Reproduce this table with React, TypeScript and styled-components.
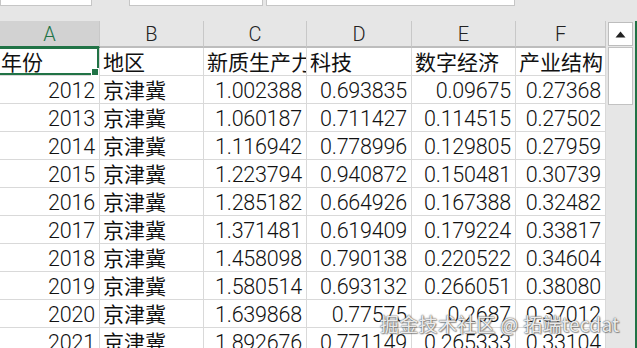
import styled, { createGlobalStyle } from "styled-components";

const GlobalStyle = createGlobalStyle`
  html, body { margin: 0; padding: 0; background: #e6e6e6; }
  body { font-family: "Liberation Sans", "Noto Sans CJK SC", sans-serif; }
`;

type Row = [string, string, string, string, string, string];

const rows: Row[] = [
  ["2012", "京津冀", "1.002388", "0.693835", "0.09675", "0.27368"],
  ["2013", "京津冀", "1.060187", "0.711427", "0.114515", "0.27502"],
  ["2014", "京津冀", "1.116942", "0.778996", "0.129805", "0.27959"],
  ["2015", "京津冀", "1.223794", "0.940872", "0.150481", "0.30739"],
  ["2016", "京津冀", "1.285182", "0.664926", "0.167388", "0.32482"],
  ["2017", "京津冀", "1.371481", "0.619409", "0.179224", "0.33817"],
  ["2018", "京津冀", "1.458098", "0.790138", "0.220522", "0.34604"],
  ["2019", "京津冀", "1.580514", "0.693132", "0.266051", "0.38080"],
  ["2020", "京津冀", "1.639868", "0.77575", "0.2687", "0.37012"],
  ["2021", "京津冀", "1.892676", "0.771149", "0.265333", "0.33104"],
];

const heads = ["年份", "地区", "新质生产力", "科技", "数字经济", "产业结构"];
const letters = ["A", "B", "C", "D", "E", "F"];
const COLS = "100px 104px 103px 105px 104px 90px";

const Screen = styled.div`
  position: relative;
  width: 637px;
  height: 348px;
  overflow: hidden;
  background: #e6e6e6;
`;

const TopBar = styled.div`
  height: 21px;
  display: flex;
  align-items: flex-start;
`;

const Field = styled.div<{ $w: number; $ml: number }>`
  width: ${(p) => p.$w}px;
  margin-left: ${(p) => p.$ml}px;
  height: 5px;
  background: #fff;
  border: 1px solid #c6c6c6;
  border-top: none;
`;

const Main = styled.div`
  display: flex;
  height: 327px;
`;

const Sheet = styled.div`
  width: 606px;
  overflow: hidden;
`;

const Grid = styled.div`
  display: grid;
  grid-template-columns: ${COLS};
  width: 606px;
`;

const ColHead = styled.div<{ $sel?: boolean }>`
  height: 25px;
  display: flex;
  align-items: flex-end;
  justify-content: center;
  font-family: "Roboto", "Liberation Sans", sans-serif;
  font-weight: 300;
  font-size: 20px;
  line-height: 23px;
  color: ${(p) => (p.$sel ? "#217346" : "#222")};
  background: ${(p) => (p.$sel ? "#d2d2d2" : "#e6e6e6")};
  border-right: 1px solid #c8c8c8;
  border-bottom: 2px solid ${(p) => (p.$sel ? "#217346" : "#bdbdbd")};
`;

const Cell = styled.div<{ $num?: boolean; $first?: boolean }>`
  position: relative;
  height: 28px;
  box-sizing: border-box;
  padding: 0 ${(p) => (p.$num ? "4px" : "0")} 0 ${(p) => (p.$first ? "1px" : "3px")};
  border-right: 1px solid #d9d9d9;
  border-bottom: 1px solid #d9d9d9;
  background: #fff;
  color: #111;
  text-align: ${(p) => (p.$num ? "right" : "left")};
  white-space: nowrap;
  overflow: hidden;
  font-family: ${(p) =>
    p.$num ? '"Roboto", "Liberation Sans", sans-serif' : '"Noto Sans CJK SC", sans-serif'};
  font-weight: ${(p) => (p.$num ? 300 : 400)};
  font-size: ${(p) => (p.$num ? "21.5px" : "21px")};
  letter-spacing: ${(p) => (p.$num ? "-0.2px" : "0")};
  line-height: ${(p) => (p.$num ? "29px" : "27px")};
`;

const Selection = styled.div`
  position: absolute;
  inset: -1px 0 0 -2px;
  border: 2px solid #217346;
  pointer-events: none;
`;

const Handle = styled.div`
  position: absolute;
  right: -2px;
  bottom: -3px;
  width: 6px;
  height: 6px;
  background: #217346;
  border: 1px solid #fff;
`;

const SelCell = styled(Cell)`
  overflow: visible;
  z-index: 2;
`;

const ScrollBar = styled.div`
  width: 25px;
  margin-left: 2px;
  padding-top: 1px;
  display: flex;
  flex-direction: column;
  background: #e6e6e6;
`;

const ArrowBtn = styled.div`
  height: 24px;
  background: #fff;
  border: 1px solid #bdbdbd;
  display: flex;
  align-items: center;
  justify-content: center;
  box-sizing: border-box;
`;

const Thumb = styled.div`
  height: 58px;
  margin-top: 1px;
  background: #fff;
  border: 1px solid #c2c2c2;
  box-sizing: border-box;
`;

const Edge = styled.div`
  width: 2px;
  margin-left: 2px;
  background: #217346;
`;

const Watermark = styled.div`
  position: absolute;
  left: 380px;
  top: 310px;
  font-family: "Noto Sans CJK SC", sans-serif;
  font-size: 19px;
  letter-spacing: 0.3px;
  color: rgba(255, 255, 255, 0.9);
  text-shadow: 0 0 1px #555, 0 0 2px #777, 1px 1px 1px rgba(0, 0, 0, 0.35);
  white-space: nowrap;
`;

export default function App() {
  return (
    <>
      <GlobalStyle />
      <Screen>
        <TopBar>
          <Field $w={90} $ml={0} />
          <Field $w={132} $ml={37} />
          <Field $w={247} $ml={3} />
        </TopBar>
        <Main>
          <Sheet>
            <Grid>
              {letters.map((l, i) => (
                <ColHead key={l} $sel={i === 0}>
                  {l}
                </ColHead>
              ))}
              {heads.map((h, i) =>
                i === 0 ? (
                  <SelCell key={h} $first>
                    {h}
                    <Selection>
                      <Handle />
                    </Selection>
                  </SelCell>
                ) : (
                  <Cell key={h}>{h}</Cell>
                )
              )}
              {rows.map((r) =>
                r.map((v, i) => (
                  <Cell key={r[0] + i} $num={i !== 1}>
                    {v}
                  </Cell>
                ))
              )}
            </Grid>
          </Sheet>
          <ScrollBar>
            <ArrowBtn>
              <svg width="11" height="7" viewBox="0 0 11 7">
                <path d="M5.5 0.5 L10.5 6.5 L0.5 6.5 Z" fill="#222" />
              </svg>
            </ArrowBtn>
            <Thumb />
          </ScrollBar>
          <Edge />
        </Main>
        <Watermark>掘金技术社区 @ 拓端tecdat</Watermark>
      </Screen>
    </>
  );
}
